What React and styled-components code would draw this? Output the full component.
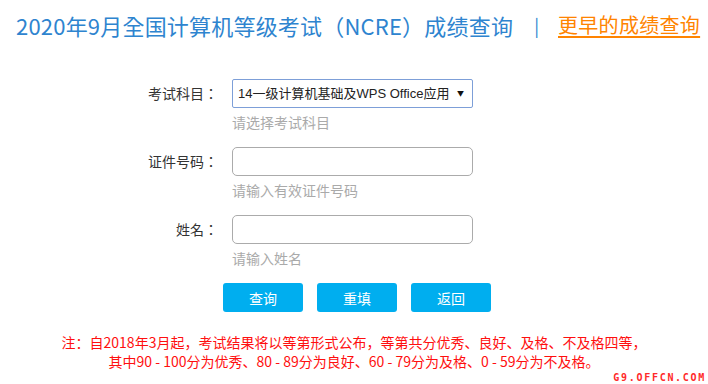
import React from 'react';
import styled, { createGlobalStyle } from 'styled-components';

const GlobalStyle = createGlobalStyle`
  html, body {
    margin: 0;
    padding: 0;
    background: #fff;
  }
  body {
    font-family: "Noto Sans CJK SC", "Noto Sans", sans-serif;
  }
`;

const Page = styled.div`
  position: relative;
  width: 708px;
  height: 384px;
  overflow: hidden;
`;

const Header = styled.header`
  display: flex;
  align-items: center;
  padding: 6px 0 0 16px;
  height: 38px;
`;

const Title = styled.h1`
  margin: 0;
  font-family: "Noto Sans CJK TC", "Noto Sans CJK SC", sans-serif;
  font-size: 22px;
  font-weight: 400;
  line-height: 30px;
  letter-spacing: 0.2px;
  color: #2e84cf;
  white-space: nowrap;
`;

const Divider = styled.span`
  margin: 0 19px 0 21px;
  font-size: 18px;
  color: #2e84cf;
`;

const HistoryLink = styled.a`
  font-size: 20px;
  line-height: 28px;
  letter-spacing: 0.3px;
  color: #ff8400;
  text-decoration: underline;
  text-underline-offset: 3px;
  white-space: nowrap;
`;

const Form = styled.form`
  display: grid;
  grid-template-columns: 218px 241px;
  column-gap: 14px;
  row-gap: 15px;
  margin-top: 35px;
`;

const Label = styled.label`
  justify-self: end;
  height: 29px;
  line-height: 29px;
  font-family: "Noto Sans CJK TC", "Noto Sans CJK SC", sans-serif;
  font-size: 14px;
  color: #333;
`;

const Field = styled.div`
  display: flex;
  flex-direction: column;
`;

const SelectWrap = styled.div`
  position: relative;
  &::after {
    content: "▼";
    position: absolute;
    right: 9px;
    top: 9px;
    font-size: 7px;
    line-height: 10px;
    color: #111;
    pointer-events: none;
  }
`;

const Select = styled.select`
  appearance: none;
  width: 241px;
  height: 29px;
  box-sizing: border-box;
  border: 1px solid #7d9fd8;
  border-radius: 2px;
  padding: 0 12px 0 5px;
  font-family: "Liberation Sans", "Noto Sans CJK SC", sans-serif;
  font-size: 13px;
  color: #222;
  background: #fff;
  outline: none;
`;

const Input = styled.input`
  width: 241px;
  height: 29px;
  box-sizing: border-box;
  border: 1px solid #ababab;
  border-radius: 5px;
  padding: 0 6px;
  font-size: 14px;
  outline: none;
`;

const Hint = styled.span`
  margin-top: 4px;
  font-size: 14px;
  line-height: 20px;
  color: #aaaaaa;
`;

const Buttons = styled.div`
  display: flex;
  gap: 14px;
  padding-left: 223px;
  margin-top: 15px;
`;

const Button = styled.button`
  width: 80px;
  height: 29px;
  border: none;
  border-radius: 3px;
  background: #00aeef;
  color: #fff;
  font-family: "Noto Sans CJK SC", sans-serif;
  font-size: 14px;
  cursor: pointer;
`;

const Note = styled.p`
  margin: 21px 0 0;
  text-align: center;
  font-size: 14px;
  line-height: 19px;
  color: #ff0f0f;
`;

const Watermark = styled.span`
  position: absolute;
  right: 2px;
  bottom: 1px;
  font-family: "DejaVu Sans Mono", monospace;
  font-weight: 700;
  font-size: 10px;
  letter-spacing: 1.7px;
  line-height: 10px;
  color: #ff2a2a;
`;

export default function App() {
  return (
    <Page>
      <GlobalStyle />
      <Header>
        <Title>2020年9月全国计算机等级考试（NCRE）成绩查询</Title>
        <Divider>|</Divider>
        <HistoryLink href="#">更早的成绩查询</HistoryLink>
      </Header>

      <Form onSubmit={(e) => e.preventDefault()}>
        <Label>考试科目：</Label>
        <Field>
          <SelectWrap>
            <Select defaultValue="14">
              <option value="14">14一级计算机基础及WPS Office应用</option>
            </Select>
          </SelectWrap>
          <Hint>请选择考试科目</Hint>
        </Field>

        <Label>证件号码：</Label>
        <Field>
          <Input type="text" />
          <Hint>请输入有效证件号码</Hint>
        </Field>

        <Label>姓名：</Label>
        <Field>
          <Input type="text" />
          <Hint>请输入姓名</Hint>
        </Field>
      </Form>

      <Buttons>
        <Button type="button">查询</Button>
        <Button type="button">重填</Button>
        <Button type="button">返回</Button>
      </Buttons>

      <Note>
        注：自2018年3月起，考试结果将以等第形式公布，等第共分优秀、良好、及格、不及格四等，
        <br />
        其中90 - 100分为优秀、80 - 89分为良好、60 - 79分为及格、0 - 59分为不及格。
      </Note>

      <Watermark>G9.OFFCN.COM</Watermark>
    </Page>
  );
}
